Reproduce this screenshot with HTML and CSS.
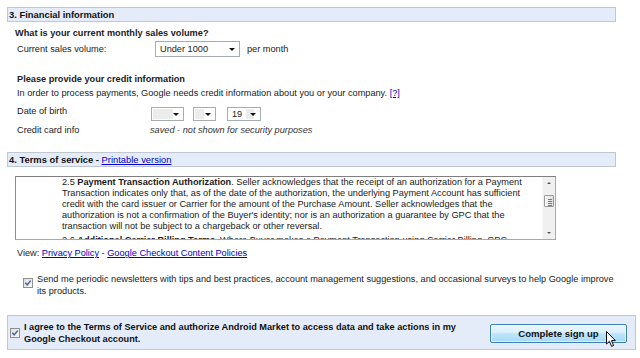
FILE: index.html
```html
<!DOCTYPE html>
<html lang="en">
<head>
  <meta charset="UTF-8">
  <title>Google Checkout sign up</title>
  <link rel="stylesheet" href="styles.css">
</head>
<body>
  <div class="page">
    <div class="head">3. Financial information</div>

    <div class="question">What is your current monthly sales volume?</div>
    <div class="row sales-row">
      <span class="label sales-label">Current sales volume:</span>
      <div class="select sales-select"><span>Under 1000</span><i class="arrow"></i></div>
      <span class="after">per month</span>
    </div>

    <div class="question q-credit">Please provide your credit information</div>
    <div class="intro">In order to process payments, Google needs credit information about you or your company. <a href="#">[?]</a></div>
    <div class="row dob-row">
      <span class="label dob-label">Date of birth</span>
      <div class="select dob-month"><span class="blur b-month"></span><i class="arrow"></i></div>
      <div class="select dob-day"><span class="blur b-day"></span><i class="arrow"></i></div>
      <div class="select dob-year"><span>19</span><span class="blur b-year"></span><i class="arrow"></i></div>
    </div>
    <div class="row card-row">
      <span class="label card-label">Credit card info</span>
      <em class="saved">saved - not shown for security purposes</em>
    </div>

    <div class="head head-terms">4. Terms of service - <a href="#">Printable version</a></div>

    <div class="terms">
      <div class="terms-text">
        2.5 <b>Payment Transaction Authorization</b>. Seller acknowledges that the receipt of an authorization for a Payment<br>
        Transaction indicates only that, as of the date of the authorization, the underlying Payment Account has sufficient<br>
        credit with the card issuer or Carrier for the amount of the Purchase Amount. Seller acknowledges that the<br>
        authorization is not a confirmation of the Buyer's identity; nor is an authorization a guarantee by GPC that the<br>
        transaction will not be subject to a chargeback or other reversal.
        <div class="next-clause">2.6 <b>Additional Carrier Billing Terms.</b> Where Buyer makes a Payment Transaction using Carrier Billing, GPC</div>
      </div>
      <div class="scrollbar">
        <i class="sb-up"></i>
        <div class="sb-thumb"><i></i><i></i><i></i><i></i></div>
        <i class="sb-down"></i>
      </div>
    </div>

    <div class="view">View: <a href="#">Privacy Policy</a> - <a href="#">Google Checkout Content Policies</a></div>

    <div class="newsletter">
      <svg class="check" width="10" height="10" viewBox="0 0 10 10">
        <defs><linearGradient id="cbg" x1="0" y1="0" x2="1" y2="1"><stop offset="0" stop-color="#dcdcdc"/><stop offset="1" stop-color="#fafafa"/></linearGradient></defs>
        <rect x="0.5" y="0.5" width="9" height="9" fill="url(#cbg)" stroke="#8f8f8f"/>
        <path d="M2.3 4.8 L4.2 6.9 L7.7 2.6" fill="none" stroke="#4a5f97" stroke-width="1.5"/>
      </svg>
      <p>Send me periodic newsletters with tips and best practices, account management suggestions, and occasional surveys to help Google improve<br>its products.</p>
    </div>

    <div class="agree">
      <svg class="check" width="10" height="10" viewBox="0 0 10 10">
        <rect x="0.5" y="0.5" width="9" height="9" fill="url(#cbg)" stroke="#8f8f8f"/>
        <path d="M2.3 4.8 L4.2 6.9 L7.7 2.6" fill="none" stroke="#4a5f97" stroke-width="1.5"/>
      </svg>
      <p>I agree to the Terms of Service and authorize Android Market to access data and take actions in my<br>Google Checkout account.</p>
      <button class="complete">Complete sign up</button>
      <svg class="cursor" width="12" height="17" viewBox="0 0 12 17">
        <path d="M0.5 0.5 V13 L3.4 10.3 L5.6 15.4 L7.6 14.5 L5.5 9.6 H9.4 Z" fill="#fff" stroke="#000" stroke-width="1" stroke-linejoin="round"/>
      </svg>
    </div>
  </div>
</body>
</html>
```

FILE: styles.css
```css
body {
  margin: 0;
  background: #fff;
  color: #222;
  font-family: "Liberation Sans", Arial, sans-serif;
  font-size: 9.2px;
  line-height: 11px;
}

a {
  color: #0000cc;
  text-decoration: underline;
}

.page {
  padding: 7px 4px 0 7px;
}

.head {
  box-sizing: border-box;
  width: 609px;
  height: 15px;
  padding-left: 1px;
  border: 1px solid #c1c7d1;
  background: #e5ecf9;
  color: #111;
  font-size: 9.4px;
  font-weight: bold;
  line-height: 13px;
}

.head a {
  font-weight: normal;
}

.question {
  margin: 6px 0 0 8px;
  font-weight: bold;
}

.q-credit {
  margin: 17px 0 0 10px;
}

.row {
  display: flex;
  align-items: center;
  padding-left: 10px;
}

.label {
  flex: none;
}

.sales-row {
  margin-top: 2px;
  height: 16px;
}

.sales-label { width: 138px; }
.dob-label { width: 134px; }
.card-label { width: 133px; }

.intro {
  margin: 3px 0 0 10px;
}

.select {
  box-sizing: border-box;
  position: relative;
  display: flex;
  align-items: center;
  height: 16px;
  padding-left: 4px;
  border: 1px solid #a5acb2;
  background: #fff;
}

.arrow {
  position: absolute;
  right: 4px;
  top: 50%;
  margin-top: -1px;
  border-left: 3px solid transparent;
  border-right: 3px solid transparent;
  border-top: 3px solid #111;
}

.sales-select {
  width: 85px;
}

.after {
  margin-left: 7px;
}

.dob-row {
  margin-top: 7px;
  align-items: flex-start;
}

.dob-row .select {
  height: 14px;
  margin-top: 1px;
  padding-left: 1px;
}

.dob-month { width: 33px; }
.dob-day { width: 23px; margin-left: 9px; }
.dob-year { width: 34px; margin-left: 11px; }
.dob-year span:first-child { margin-left: 3px; }

.blur {
  display: block;
  height: 10px;
  background: #ececec;
}

.b-month { width: 20px; }
.b-day { width: 9px; }
.b-year { width: 8px; margin-left: 4px; }

.card-row {
  margin-top: 4px;
}

.saved {
  color: #333;
}

.head-terms {
  margin-top: 16px;
}

.terms {
  box-sizing: border-box;
  display: flex;
  width: 541px;
  height: 64px;
  margin: 9px 0 0 8px;
  border: 1px solid #a9a9a9;
  border-top-color: #7f7f7f;
  border-left-color: #8c8c8c;
  overflow: hidden;
}

.terms-text {
  flex: 1;
  padding-left: 46px;
  white-space: nowrap;
  overflow: hidden;
  line-height: 11px;
  color: #1a1a1a;
}

.next-clause {
  margin-top: 3px;
}

.scrollbar {
  position: relative;
  flex: none;
  width: 12px;
  background: #f0f0f0;
  border-left: 1px solid #f7f7f7;
}

.sb-up,
.sb-down {
  position: absolute;
  left: 4px;
  border-left: 2px solid transparent;
  border-right: 2px solid transparent;
}

.sb-up {
  top: 5px;
  border-bottom: 2px solid #555;
}

.sb-down {
  bottom: 5px;
  border-top: 2px solid #555;
}

.sb-thumb {
  position: absolute;
  top: 18px;
  left: 1px;
  box-sizing: border-box;
  width: 10px;
  height: 12px;
  padding: 3px 0 0 3px;
  border: 1px solid #9a9a9a;
  border-radius: 1px;
  background: linear-gradient(to right, #f4f4f4, #dedede);
}

.sb-thumb i {
  display: block;
  width: 4px;
  height: 1px;
  margin-bottom: 1px;
  background: #777;
}

.view {
  margin: 8px 0 0 10px;
}

.newsletter {
  display: flex;
  align-items: flex-start;
  margin: 14px 0 0 16px;
}

.newsletter .check {
  flex: none;
  margin: 5px 4px 0 0;
}

.newsletter p,
.agree p {
  margin: 0;
  line-height: 12px;
  white-space: nowrap;
}

.agree {
  position: relative;
  box-sizing: border-box;
  display: flex;
  align-items: flex-start;
  width: 629px;
  height: 35px;
  margin-top: 18px;
  padding: 5px 8px 0 2px;
  border: 1px solid #c3c6cc;
  background: #e5ecf9;
}

.agree .check {
  flex: none;
  margin: 7px 4px 0 0;
}

.agree p {
  flex: 1;
  font-weight: bold;
  color: #111;
}

.complete {
  flex: none;
  width: 137px;
  height: 19px;
  margin-top: 3px;
  padding: 0;
  border: 1px solid #3c7fb1;
  border-radius: 2px;
  background: linear-gradient(to bottom, #eaf6fd 0%, #d9f0fc 45%, #bee6fd 50%, #a7d9f5 100%);
  box-shadow: inset 0 0 0 1px rgba(255, 255, 255, 0.6);
  color: #111;
  font-family: "Liberation Sans", Arial, sans-serif;
  font-size: 9.6px;
  font-weight: bold;
}

.cursor {
  position: absolute;
  left: 598px;
  top: 15px;
}
```
